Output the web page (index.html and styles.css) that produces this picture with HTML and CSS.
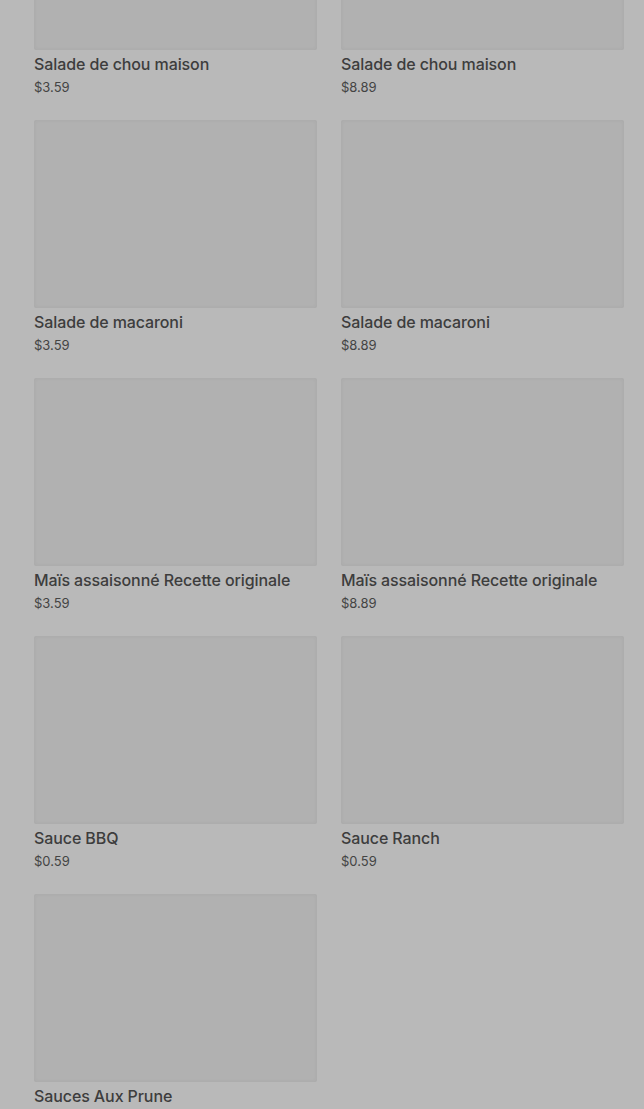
FILE: index.html
```html
<!DOCTYPE html>
<html lang="fr">
<head>
    <meta charset="UTF-8">
    <meta name="viewport" content="width=device-width, initial-scale=1.0">
    <title>Accompagnements</title>
    <link rel="stylesheet" href="styles.css">
</head>
<body>
    <div class="overlay">
        <div class="grille">
            <div class="produit">
                <div class="photo"></div>
                <div class="nom">Salade de chou maison</div>
                <div class="prix">$3.59</div>
            </div>
            <div class="produit">
                <div class="photo"></div>
                <div class="nom">Salade de chou maison</div>
                <div class="prix">$8.89</div>
            </div>
            <div class="produit">
                <div class="photo"></div>
                <div class="nom">Salade de macaroni</div>
                <div class="prix">$3.59</div>
            </div>
            <div class="produit">
                <div class="photo"></div>
                <div class="nom">Salade de macaroni</div>
                <div class="prix">$8.89</div>
            </div>
            <div class="produit">
                <div class="photo"></div>
                <div class="nom">Maïs assaisonné Recette originale</div>
                <div class="prix">$3.59</div>
            </div>
            <div class="produit">
                <div class="photo"></div>
                <div class="nom">Maïs assaisonné Recette originale</div>
                <div class="prix">$8.89</div>
            </div>
            <div class="produit">
                <div class="photo"></div>
                <div class="nom">Sauce BBQ</div>
                <div class="prix">$0.59</div>
            </div>
            <div class="produit">
                <div class="photo"></div>
                <div class="nom">Sauce Ranch</div>
                <div class="prix">$0.59</div>
            </div>
            <div class="produit">
                <div class="photo"></div>
                <div class="nom">Sauces Aux Prune</div>
                <div class="prix">$0.59</div>
            </div>
        </div>
    </div>
</body>
</html>
```

FILE: styles.css
```css
body { margin: 0; background: #b9b9b9; font-family: Inter, "Liberation Sans", sans-serif; overflow: hidden; }
.overlay { height: 1109px; overflow: hidden; }
.grille { display: grid; grid-template-columns: 283px 283px; column-gap: 24px; row-gap: 21px; padding: 0 20px 0 34px; margin-top: -138px; }
.photo { height: 188px; background: #b1b1b1; border-radius: 2px; box-shadow: inset 0 0 4px rgba(0, 0, 0, 0.05); }
.nom { margin-top: 3px; font-size: 16px; font-weight: 500; line-height: 22px; letter-spacing: -0.1px; color: #3d3d3d; }
.prix { font-size: 13px; line-height: 24px; color: #444; }
```
